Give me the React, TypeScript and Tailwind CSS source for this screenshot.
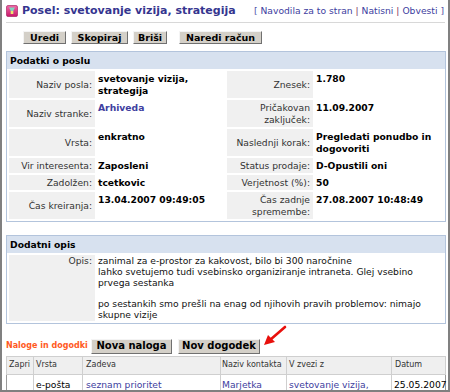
import React from 'react';

const linkColor = 'text-[#4040a0]';

function Btn({ children, className }: { children: React.ReactNode; className: string }) {
  return (
    <button className={`bg-[#d4d0c8] border border-t-[#f4f4f4] border-l-[#f4f4f4] border-r-[#707070] border-b-[#707070] font-bold text-black leading-none flex items-center justify-center ${className}`}>
      {children}
    </button>
  );
}

function Field({ l1, v1, l2, v2 }: { l1: React.ReactNode; v1: React.ReactNode; l2: React.ReactNode; v2: React.ReactNode }) {
  return (
    <tr>
      <td className="bg-[#f0f0f0] text-right align-middle pr-[3px] py-[1.5px] text-[#333]">{l1}</td>
      <td className="align-top font-bold pl-[1px] py-[1.5px] text-black">{v1}</td>
      <td className="bg-[#f0f0f0] text-right align-middle pr-[3px] py-[1.5px] text-[#333]">{l2}</td>
      <td className="align-top font-bold pl-[1px] py-[1.5px] text-black">{v2}</td>
    </tr>
  );
}

function PanelHead({ title }: { title: string }) {
  return (
    <div className="bg-[#d7e1ef] h-[17px] flex items-center pl-[3px] font-bold text-black">{title}</div>
  );
}

export default function App() {
  return (
    <div className="relative w-[450px] h-[392px] overflow-hidden bg-white border-l-2 border-r-2 border-b-2 border-[#808080] font-['DejaVu_Sans',Verdana,sans-serif] text-[9.2px] leading-[12px]">
      {/* Title bar */}
      <div className="ml-[4px] mr-[3px] h-[23px] border-b border-[#d8d8d8] flex items-center justify-between">
        <div className="flex items-center gap-[4px]">
          <svg width="12" height="12" viewBox="0 0 12 12">
            <defs>
              <linearGradient id="pk" x1="0" y1="0" x2="0" y2="1">
                <stop offset="0" stopColor="#f06aa6" />
                <stop offset="1" stopColor="#c8186a" />
              </linearGradient>
            </defs>
            <rect x="0.5" y="0.5" width="11" height="11" rx="1.5" fill="url(#pk)" stroke="#a01055" strokeWidth="0.6" />
            <path d="M3 2.5 H9 L7.2 6 V9 H4.8 V6 Z" fill="#7fd6c0" />
            <path d="M4.8 6 H7.2 V9 H4.8 Z" fill="#f3e36a" />
          </svg>
          <span className="font-bold text-[11px] text-[#35358f]">Posel: svetovanje vizija, strategija</span>
        </div>
        <div className="text-[#5050a8] pr-[1px]">
          [ <span className={linkColor}>Navodila za to stran</span> <span className="text-[#803060]">|</span>{' '}
          <span className={linkColor}>Natisni</span> <span className="text-[#803060]">|</span>{' '}
          <span className={linkColor}>Obvesti</span> ]
        </div>
      </div>

      {/* Action buttons */}
      <div className="flex mt-[8px] ml-[21px] h-[13px] text-[9.5px]">
        <Btn className="w-[43px] h-[13px]">Uredi</Btn>
        <Btn className="w-[57px] h-[13px] ml-[5px]">Skopiraj</Btn>
        <Btn className="w-[34px] h-[13px] ml-[5px]">Briši</Btn>
        <Btn className="w-[83px] h-[13px] ml-[12px]">Naredi račun</Btn>
      </div>

      {/* Podatki o poslu */}
      <div className="mt-[7px] ml-[4px] mr-[2px] border border-[#b3c4dc]">
        <PanelHead title="Podatki o poslu" />
        <table className="w-full table-fixed border-separate border-spacing-[2px]">
          <colgroup>
            <col className="w-[86px]" />
            <col className="w-[128px]" />
            <col className="w-[86px]" />
            <col />
          </colgroup>
          <tbody>
            <Field l1="Naziv posla:" v1={<>svetovanje vizija,<br />strategija</>} l2="Znesek:" v2="1.780" />
            <Field
              l1="Naziv stranke:"
              v1={<span className={linkColor}>Arhiveda</span>}
              l2={<>Pričakovan<br />zaključek:</>}
              v2="11.09.2007"
            />
            <Field l1="Vrsta:" v1="enkratno" l2="Naslednji korak:" v2={<>Pregledati ponudbo in<br />dogovoriti</>} />
            <Field l1="Vir interesenta:" v1="Zaposleni" l2="Status prodaje:" v2="D-Opustili oni" />
            <Field l1="Zadolžen:" v1="tcetkovic" l2="Verjetnost (%):" v2="50" />
            <Field l1="Čas kreiranja:" v1="13.04.2007 09:49:05" l2={<>Čas zadnje<br />spremembe:</>} v2="27.08.2007 10:48:49" />
          </tbody>
        </table>
      </div>

      {/* Dodatni opis */}
      <div className="mt-[13px] ml-[4px] mr-[2px] border border-[#b3c4dc]">
        <PanelHead title="Dodatni opis" />
        <table className="w-full table-fixed border-separate border-spacing-[2px]">
          <colgroup>
            <col className="w-[86px]" />
            <col />
          </colgroup>
          <tbody>
            <tr>
              <td className="bg-[#f0f0f0] text-right align-top pr-[3px] pt-[1px] text-[#333] leading-[10.8px]">Opis:</td>
              <td className="align-top pl-[1px] pt-[1px] text-[#111] leading-[10.8px]">
                zanimal za e-prostor za kakovost, bilo bi 300 naročnine
                <br />
                lahko svetujemo tudi vsebinsko organiziranje intraneta. Glej vsebino
                <br />
                prvega sestanka
                <br />
                <br />
                po sestankih smo prešli na enag od njihovih pravih problemov: nimajo
                <br />
                skupne vizije
              </td>
            </tr>
          </tbody>
        </table>
      </div>

      {/* Naloge in dogodki */}
      <div className="flex items-center mt-[15px] ml-[4px] h-[15px]">
        <span className="font-bold text-[8px] text-[#ff5a1e] w-[85px]">Naloge in dogodki</span>
        <Btn className="w-[81px] h-[15px] text-[10px]">Nova naloga</Btn>
        <Btn className="w-[82px] h-[15px] ml-[6px] text-[10px]">Nov dogodek</Btn>
      </div>

      <table className="mt-[2px] ml-[4px] w-[440px] table-fixed border-collapse border border-[#9a9a9a]">
        <colgroup>
          <col className="w-[27px]" />
          <col className="w-[49px]" />
          <col className="w-[138px]" />
          <col className="w-[66px]" />
          <col className="w-[105px]" />
          <col />
        </colgroup>
        <thead>
          <tr className="bg-[#efefef] text-[8px] text-[#333] h-[18px]">
            <th className="font-normal text-left pl-[2px] border border-[#cfcfcf]">Zapri</th>
            <th className="font-normal text-left pl-[2px] border border-[#cfcfcf]">Vrsta</th>
            <th className="font-normal text-left pl-[3px] border border-[#cfcfcf]">Zadeva</th>
            <th className="font-normal text-left pl-[1px] border border-[#cfcfcf]">Naziv kontakta</th>
            <th className="font-normal text-left pl-[2px] border border-[#cfcfcf]">V zvezi z</th>
            <th className="font-normal text-left pl-[3px] border border-[#cfcfcf]">Datum</th>
          </tr>
        </thead>
        <tbody>
          <tr className="align-top">
            <td className="border-r border-[#cfcfcf] pt-[4px]"></td>
            <td className="border-r border-[#cfcfcf] pt-[4px] pl-[2px] text-black">e-pošta</td>
            <td className={`border-r border-[#cfcfcf] pt-[4px] pl-[3px] ${linkColor}`}>seznam prioritet</td>
            <td className={`border-r border-[#cfcfcf] pt-[4px] pl-[1px] ${linkColor}`}>Marjetka Perme</td>
            <td className={`border-r border-[#cfcfcf] pt-[4px] pl-[2px] ${linkColor}`}>svetovanje vizija, strategija</td>
            <td className="pt-[4px] pl-[2px] text-black">25.05.2007</td>
          </tr>
        </tbody>
      </table>

      {/* red pointer arrow */}
      <svg className="absolute left-[258px] top-[324px]" width="30" height="24" viewBox="0 0 30 24">
        <path d="M25 3 L10 16" stroke="#e8100c" strokeWidth="2.6" strokeLinecap="round" />
        <path d="M4 21 L8 11 L15 18 Z" fill="#e8100c" />
      </svg>
    </div>
  );
}
